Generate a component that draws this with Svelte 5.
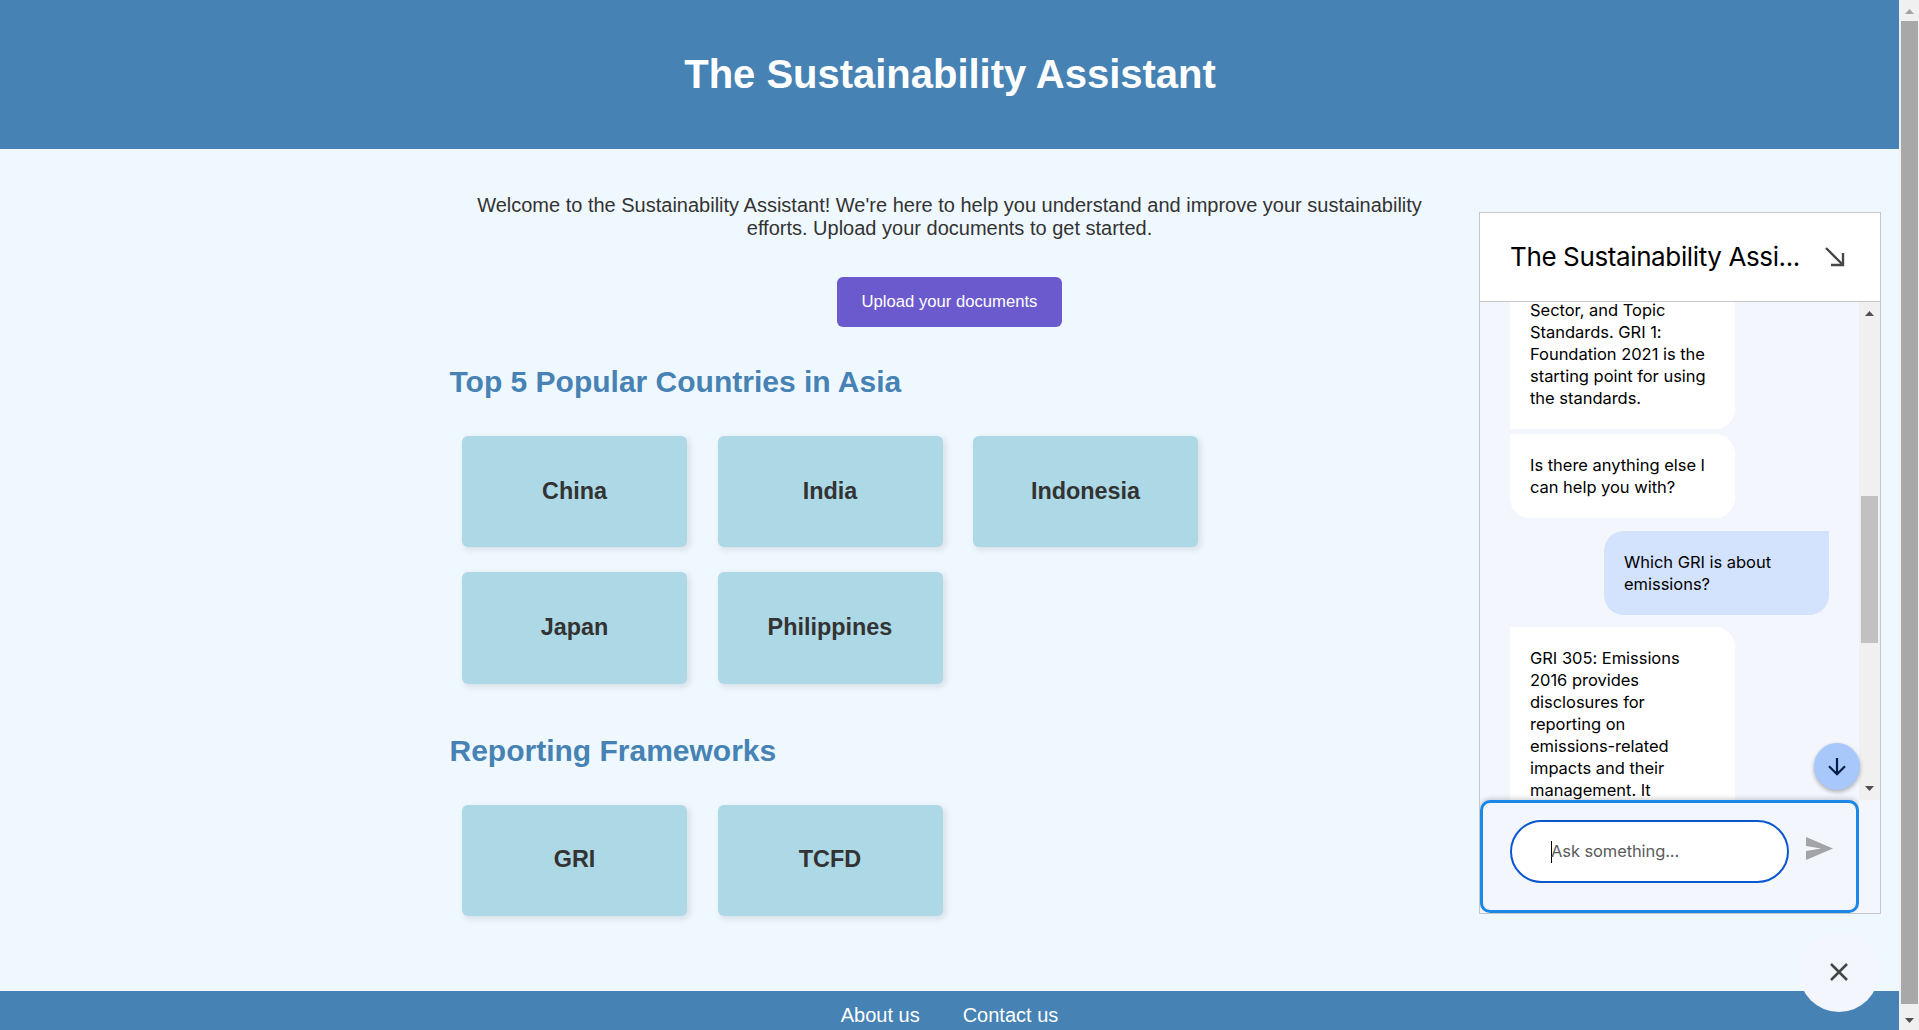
<script>
  const countries = ['China', 'India', 'Indonesia', 'Japan', 'Philippines'];
  const frameworks = ['GRI', 'TCFD'];
  const messages = [
    { kind: 'first', lines: ['Sector, and Topic', 'Standards. GRI 1:', 'Foundation 2021 is the', 'starting point for using', 'the standards.'] },
    { kind: 'follow', lines: ['Is there anything else I', 'can help you with?'] },
    { kind: 'user', lines: ['Which GRI is about', 'emissions?'] },
    { kind: 'reply', lines: ['GRI 305: Emissions', '2016 provides', 'disclosures for', 'reporting on', 'emissions-related', 'impacts and their', 'management. It'] }
  ];
</script>

<div class="window">
  <div class="page">
    <header><h1>The Sustainability Assistant</h1></header>
    <main>
      <p class="welcome">Welcome to the Sustainability Assistant! We're here to help you understand and improve your sustainability efforts. Upload your documents to get started.</p>
      <button class="upload">Upload your documents</button>
      <h2>Top 5 Popular Countries in Asia</h2>
      <div class="cards">
        {#each countries as name}<div class="card">{name}</div>{/each}
      </div>
      <h2 class="second">Reporting Frameworks</h2>
      <div class="cards">
        {#each frameworks as name}<div class="card">{name}</div>{/each}
      </div>
    </main>
    <footer><a href="#about">About us</a><a href="#contact">Contact us</a></footer>
  </div>

  <div class="scroll">
    <svg width="20" height="21" viewBox="0 0 20 21"><path d="M6 14h9l-4.5-5z" fill="#a3a3a3" /></svg>
    <div class="thumb"></div>
    <svg width="20" height="26" viewBox="0 0 20 26"><path d="M6 14h9l-4.5 5z" fill="#505050" /></svg>
  </div>

  <section class="chat">
    <div class="chat-head">
      <span class="title">The Sustainability Assi...</span>
      <svg width="20" height="20" viewBox="0 0 20 20" fill="none" stroke="#474747" stroke-width="2.4"><path d="M1 1l16.5 16.5M18 6v12H6" /></svg>
    </div>
    <div class="body">
      <div class="messages">
        {#each messages as m}
          <div class="bubble {m.kind}">{#each m.lines as line}<div>{line}</div>{/each}</div>
        {/each}
      </div>
      <div class="inner-scroll">
        <svg width="21" height="21" viewBox="0 0 21 21"><path d="M6 14h9l-4.5-5z" fill="#505050" /></svg>
        <div class="inner-thumb"></div>
        <svg width="21" height="21" viewBox="0 0 21 21"><path d="M6 7h9l-4.5 5z" fill="#505050" /></svg>
      </div>
    </div>
    <div class="ask">
      <div class="field"><span class="caret"></span><span class="hint">Ask something...</span></div>
      <svg class="send" width="27" height="23" viewBox="0 0 27 23"><path d="M0 0L27 11.5 0 23V14L15 11.5 0 9z" fill="#a3a4a8" /></svg>
    </div>
    <button class="down" aria-label="Scroll down">
      <svg width="18" height="18" viewBox="0 0 18 18" fill="none" stroke="#041e49" stroke-width="2.2"><path d="M9 0v16M1 8.3l8 8 8-8" /></svg>
    </button>
  </section>

  <button class="close" aria-label="Close chat">
    <svg width="18" height="18" viewBox="0 0 18 18" fill="none" stroke="#444746" stroke-width="2.5"><path d="M1 1l16 16M17 1L1 17" /></svg>
  </button>
</div>

<style>
  .window { position: relative; display: flex; width: 1919px; height: 1030px; overflow: hidden; background: #f0f8ff; color: #333; font-family: "Liberation Sans", Arial, sans-serif; }
  .page { width: 1899px; display: flex; flex-direction: column; }
  header { height: 149px; box-sizing: border-box; padding-top: 51px; background: #4682b4; text-align: center; }
  h1 { margin: 0 0 0 1px; font-size: 40px; line-height: 46px; letter-spacing: -.02px; color: #fff; }
  main { width: 1000px; height: 842px; box-sizing: border-box; padding: 45px 0 0; margin: 0 auto; display: flex; flex-direction: column; }
  .welcome { margin: 0 25px; font-size: 20px; line-height: 23px; text-align: center; }
  .upload { align-self: center; width: 225px; height: 50px; flex: none; margin-top: 37px; border: 0; border-radius: 6px; background: #6a5acd; color: #fff; font: 16.67px/20px "Liberation Sans", Arial, sans-serif; }
  h2 { margin: 37px 0 0; font-size: 30px; line-height: 35px; color: #4682b4; }
  .second { margin-top: 49px; }
  .cards { display: grid; grid-template-columns: repeat(3, 225px); column-gap: 30.5px; row-gap: 25px; width: 760px; margin: 37px 0 0 12.5px; }
  .card { height: 111.4px; box-sizing: border-box; padding-bottom: 1px; display: flex; align-items: center; justify-content: center; border-radius: 6px; background: #add8e6; box-shadow: 2.5px 2.5px 6px rgba(0, 0, 0, .1); font-size: 23.4px; line-height: 27px; font-weight: bold; }
  footer { height: 39px; display: flex; justify-content: center; gap: 43px; background: #4682b4; }
  footer a { margin-top: 13px; font-size: 20px; line-height: 23px; color: #fff; text-decoration: none; }

  .scroll { width: 20px; background: #f0f0f0; display: flex; flex-direction: column; }
  .scroll svg, .inner-scroll svg { flex: none; display: block; }
  .thumb { flex: 1; margin: 0 1px 0 2px; background: #a8a8a8; }

  .chat { position: absolute; left: 1479px; top: 212px; width: 402px; height: 702px; box-sizing: border-box; border: 1px solid #c4c7c5; background: #f3f6fc; display: flex; flex-direction: column; font-family: Inter, Roboto, sans-serif; color: #000; }
  .chat-head { height: 89px; box-sizing: border-box; flex: none; display: flex; align-items: center; justify-content: space-between; padding: 0 35px 0 30px; background: #fff; border-bottom: 1px solid #c4c7c5; }
  .title { padding-bottom: 2px; font-size: 26px; letter-spacing: -.38px; white-space: nowrap; }
  .body { height: 498px; flex: none; display: flex; overflow: hidden; }
  .messages { flex: 1; min-width: 0; height: 498px; overflow: hidden; display: flex; flex-direction: column; background: #f3f6fd; }
  .bubble { width: 225px; box-sizing: border-box; flex: none; margin-left: 30px; padding: 20px; background: #fff; font-size: 16.5px; line-height: 22px; letter-spacing: -.03px; white-space: nowrap; }
  .first { margin-top: -23px; border-radius: 0 0 20px 0; }
  .follow { margin-top: 5px; border-radius: 0 20px 20px 20px; }
  .user { margin: 13px 30px 12px auto; border-radius: 20px 0 20px 20px; background: #d3e3fd; }
  .reply { border-radius: 0 20px 0 0; }
  .inner-scroll { width: 21px; background: #f0f0f0; display: flex; flex-direction: column; justify-content: space-between; }
  .inner-thumb { width: 17px; height: 147px; margin: 152px 0 116px 2px; background: #c1c1c1; }
  .ask { width: 379px; height: 113px; box-sizing: border-box; flex: none; display: flex; padding: 17px 0 0 27px; border: 3px solid #1b87e6; border-radius: 10px; background: #f3f6fd; box-shadow: 0 -2px 4px rgba(0, 0, 0, .16); clip-path: inset(-6px 0 0 0); }
  .field { width: 279px; height: 63px; box-sizing: border-box; display: flex; align-items: center; padding-left: 39px; border: 2px solid #0b57d0; border-radius: 32px; background: #fff; color: #5a5c5b; font-size: 16.5px; letter-spacing: -.1px; }
  .caret { width: 1px; height: 22px; background: #000; }
  .hint { margin-left: -1px; padding-bottom: 2px; }
  .send { margin: 17px 0 0 17px; }
  .down { position: absolute; left: 334px; top: 530px; width: 46px; height: 47px; padding: 0; border: 0; border-radius: 50%; background: #a8c7fa; display: flex; align-items: center; justify-content: center; box-shadow: 0 2px 4px rgba(0, 0, 0, .3); }
  .close { position: absolute; left: 1799px; top: 932px; width: 80px; height: 80px; padding: 0; border: 0; border-radius: 50%; background: #f3f6fc; display: flex; align-items: center; justify-content: center; }
</style>
